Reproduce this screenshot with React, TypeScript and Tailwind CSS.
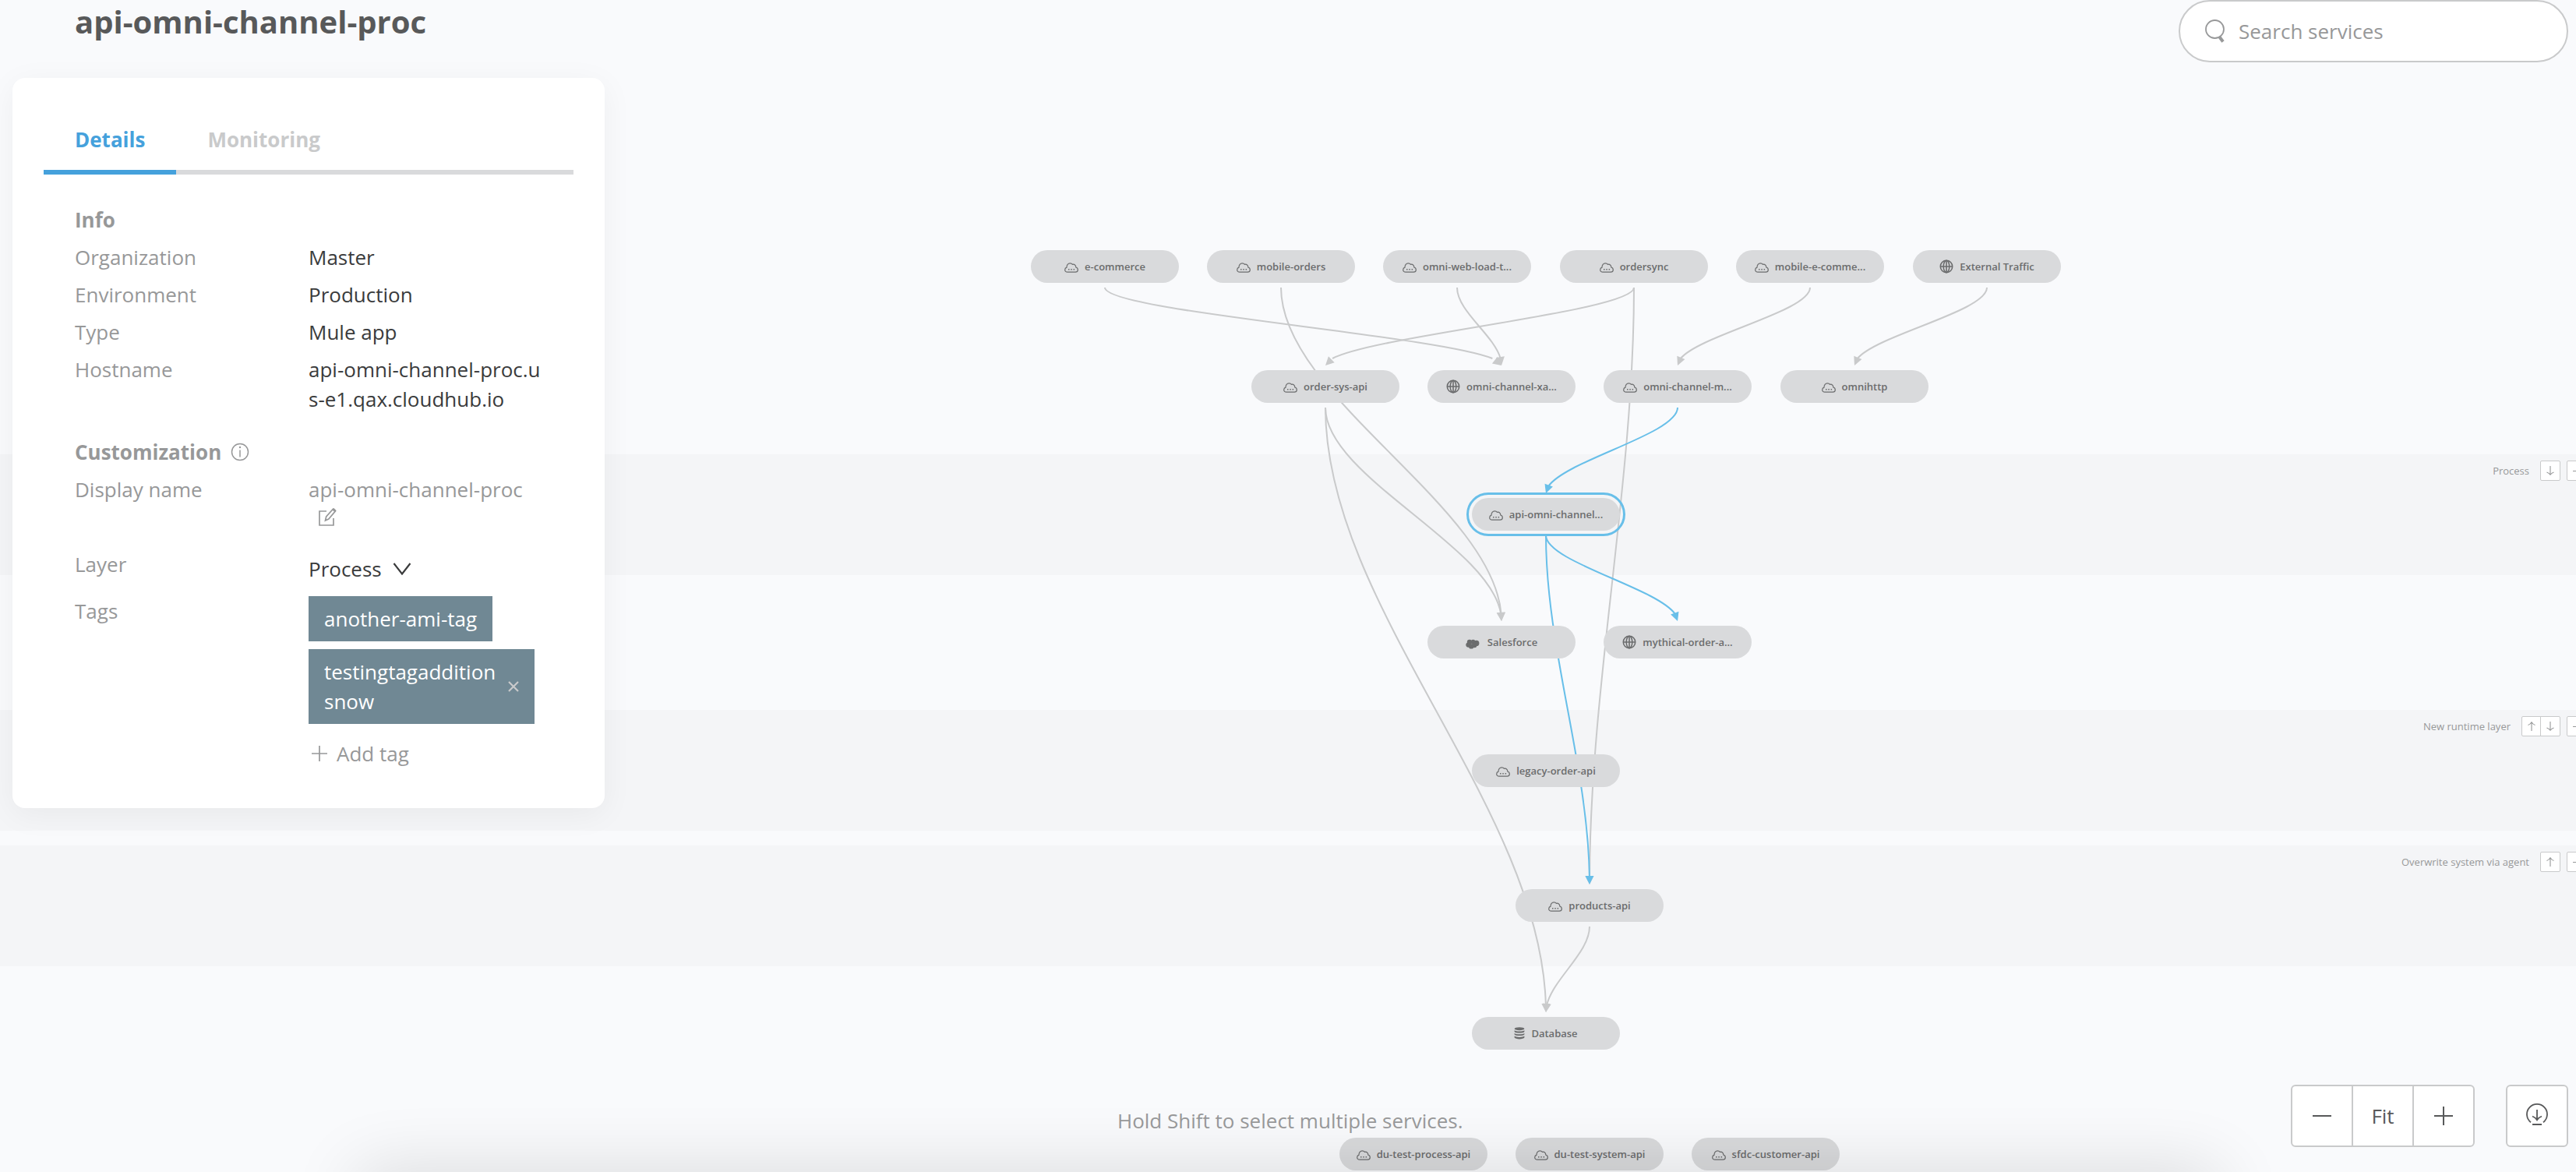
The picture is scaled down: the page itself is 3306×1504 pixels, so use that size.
import React from "react";

type IconName = "cloud" | "globe" | "salesforce" | "database";

interface ServiceNode {
  id: string;
  label: string;
  icon: IconName;
  x: number;
  y: number;
  selected?: boolean;
}

const NODES: ServiceNode[] = [
  { id: "ecommerce", label: "e-commerce", icon: "cloud", x: 1418, y: 342 },
  { id: "mobile", label: "mobile-orders", icon: "cloud", x: 1644, y: 342 },
  { id: "omniweb", label: "omni-web-load-t...", icon: "cloud", x: 1870, y: 342 },
  { id: "ordersync", label: "ordersync", icon: "cloud", x: 2097, y: 342 },
  { id: "mobilee", label: "mobile-e-comme...", icon: "cloud", x: 2323, y: 342 },
  { id: "external", label: "External Traffic", icon: "globe", x: 2550, y: 342 },
  { id: "ordersys", label: "order-sys-api", icon: "cloud", x: 1701, y: 496 },
  { id: "omnixa", label: "omni-channel-xa...", icon: "globe", x: 1927, y: 496 },
  { id: "omnim", label: "omni-channel-m...", icon: "cloud", x: 2153, y: 496 },
  { id: "omnihttp", label: "omnihttp", icon: "cloud", x: 2380, y: 496 },
  { id: "apiomni", label: "api-omni-channel...", icon: "cloud", x: 1984, y: 660, selected: true },
  { id: "salesforce", label: "Salesforce", icon: "salesforce", x: 1927, y: 824 },
  { id: "mythical", label: "mythical-order-a...", icon: "globe", x: 2153, y: 824 },
  { id: "legacy", label: "legacy-order-api", icon: "cloud", x: 1984, y: 989 },
  { id: "products", label: "products-api", icon: "cloud", x: 2040, y: 1162 },
  { id: "database", label: "Database", icon: "database", x: 1984, y: 1326 },
  { id: "dupro", label: "du-test-process-api", icon: "cloud", x: 1814, y: 1481 },
  { id: "dusys", label: "du-test-system-api", icon: "cloud", x: 2040, y: 1481 },
  { id: "sfdc", label: "sfdc-customer-api", icon: "cloud", x: 2266, y: 1481 },
];

const EDGES: [string, string, boolean][] = [
  ["ecommerce", "omnixa", false],
  ["mobile", "salesforce", false],
  ["omniweb", "omnixa", false],
  ["ordersync", "ordersys", false],
  ["ordersync", "products", false],
  ["mobilee", "omnim", false],
  ["external", "omnihttp", false],
  ["ordersys", "salesforce", false],
  ["ordersys", "database", false],
  ["products", "database", false],
  ["omnim", "apiomni", true],
  ["apiomni", "mythical", true],
  ["apiomni", "products", true],
];

function Edge({ from, to, active }: { from: ServiceNode; to: ServiceNode; active: boolean }) {
  const x1 = from.x;
  const y1 = from.y + 27;
  const x2 = to.x;
  const y2 = to.y - 27;
  const h = y2 - y1;
  // With control points at thirds, y runs linearly with t.
  const t = 1 - 9 / h;
  const bx = x1 + (x2 - x1) * (3 * t * t - 2 * t * t * t);
  const by = y1 + h * t;
  const c1y = y1 + (h / 3) * t;
  const c2x = x1 + (x2 - x1) * t * t;
  const c2y = y1 + ((2 * h) / 3) * t;
  const len = Math.hypot(x2 - bx, y2 - by);
  const ux = (x2 - bx) / len;
  const uy = (y2 - by) / len;
  const baseX = x2 - ux * 11;
  const baseY = y2 - uy * 11;
  const color = active ? "#68bfe9" : "#c9cacb";
  return (
    <g>
      <path d={`M${x1} ${y1}C${x1} ${c1y} ${c2x} ${c2y} ${bx} ${by}`} fill="none" stroke={color} strokeWidth="2" />
      <path
        d={`M${x2} ${y2}L${baseX - uy * 5.5} ${baseY + ux * 5.5}L${baseX + uy * 5.5} ${baseY - ux * 5.5}Z`}
        fill={color}
      />
    </g>
  );
}

function NodeIcon({ name }: { name: IconName }) {
  if (name === "globe") {
    return (
      <svg aria-hidden="true" className="h-[18px] w-[18px] shrink-0" viewBox="0 0 18 18" fill="none" stroke="currentColor" strokeWidth="1.6">
        <circle cx="9" cy="9" r="7.7" />
        <ellipse cx="9" cy="9" rx="3.8" ry="7.7" />
        <path d="M9 1v16M1 9h16" />
      </svg>
    );
  }
  if (name === "salesforce") {
    return (
      <svg aria-hidden="true" className="mt-1 mr-[2px] h-[13px] w-[18px] shrink-0" viewBox="0 0 18 13" fill="currentColor">
        <circle cx="5" cy="4" r="3.2" />
        <circle cx="9.6" cy="3.6" r="2.8" />
        <circle cx="13.8" cy="5.4" r="3.6" />
        <circle cx="3.4" cy="7.6" r="3.1" />
        <circle cx="7.2" cy="9.4" r="3.2" />
        <circle cx="11.2" cy="8" r="3.2" />
      </svg>
    );
  }
  if (name === "database") {
    return (
      <svg aria-hidden="true" className="h-4 w-[14px] shrink-0" viewBox="0 0 14 16" fill="currentColor">
        <ellipse cx="7" cy="2.2" rx="6.4" ry="2" />
        <path d="M.6 4.200c1.6 1.700 11.2 1.700 12.8 0v1.700c-1.2 2-11.6 2-12.8 0zM.6 7.900c1.6 1.700 11.2 1.700 12.8 0v1.700c-1.2 2-11.6 2-12.8 0zM.6 11.600c1.6 1.700 11.2 1.700 12.8 0v2c-1.2 2.400-11.6 2.400-12.8 0z" />
      </svg>
    );
  }
  return (
    <svg aria-hidden="true" className="mt-[2px] h-[13px] w-[18px] shrink-0" viewBox="0 0 18 13" fill="none" stroke="currentColor" strokeWidth="1.2">
      <path d="M4 12.2C2 12.2.7 10.900.7 9.200C.7 7.600 1.700 6.500 3 6.100C2.900 3.200 4.700.8 7.300.8C8.700.8 9.800 1.400 10.500 2.400C12.700 1.700 14.900 3.300 14.800 6C16.300 6.400 17.300 7.600 17.300 9.200C17.300 10.900 16 12.200 14.200 12.200Z" />
      <path d="M5 8.700h1.500M8.300 8.700h1.500M11.600 8.700h1.500" strokeWidth="1.5" />
    </svg>
  );
}

function NodePill({ node }: { node: ServiceNode }) {
  return (
    <button
      type="button"
      className={`absolute flex h-[42px] w-[190px] -translate-x-1/2 -translate-y-1/2 items-center justify-center gap-2 rounded-full bg-[#d9dadc] text-[13px] leading-[18px] font-semibold whitespace-nowrap text-[#6b6c6d] ${
        node.selected ? "outline-[3px] outline-offset-4 outline-[#68bfe9]" : ""
      }`}
      style={{ left: node.x, top: node.y }}
    >
      <NodeIcon name={node.icon} />
      <span>{node.label}</span>
    </button>
  );
}

function ArrowIcon({ up }: { up?: boolean }) {
  return (
    <svg aria-hidden="true" className="h-3 w-3" viewBox="0 0 12 12" fill="none" stroke="#979899" strokeWidth="1.1">
      {up ? <path d="M6 12V1M1.500 4.500Q4.500 3.500 6 .8Q7.500 3.500 10.500 4.500" /> : <path d="M6 0v11M1.500 8Q4.500 9 6 11.200Q7.500 9 10.500 8" />}
    </svg>
  );
}

function LayerBand({ label, up, down }: { label: string; up?: boolean; down?: boolean }) {
  return (
    <div className="flex h-[155px] items-start justify-end overflow-hidden bg-[#f4f5f7] pt-2">
      <span className="mr-3.5 text-[13px] leading-[26px] text-[#979899]">{label}</span>
      <div className="mr-2 flex divide-x divide-[#c9cacb] rounded-xs border border-[#c9cacb] bg-white">
        {up && (
          <button type="button" aria-label={`Move ${label} up`} className="grid h-6 w-6 place-items-center">
            <ArrowIcon up />
          </button>
        )}
        {down && (
          <button type="button" aria-label={`Move ${label} down`} className="grid h-6 w-6 place-items-center">
            <ArrowIcon />
          </button>
        )}
      </div>
      <button
        type="button"
        aria-label={`Collapse ${label}`}
        className="-mr-3.5 grid h-[26px] w-[26px] shrink-0 place-items-center rounded-xs border border-[#c9cacb] bg-white"
      >
        <span className="h-px w-2.5 bg-[#979899]" />
      </button>
    </div>
  );
}

function Canvas() {
  const byId = Object.fromEntries(NODES.map((n) => [n.id, n]));
  return (
    <section aria-label="Service graph" className="absolute inset-0 overflow-hidden">
      <div className="flex flex-col pt-[583px]">
        <LayerBand label="Process" down />
        <div className="h-[173px]" />
        <LayerBand label="New runtime layer" up down />
        <div className="h-[19px]" />
        <LayerBand label="Overwrite system via agent" up />
      </div>
      <svg aria-hidden="true" className="absolute inset-0 h-full w-full">
        {EDGES.map(([a, b, active]) => (
          <Edge key={a + b} from={byId[a]} to={byId[b]} active={active} />
        ))}
      </svg>
      {NODES.map((n) => (
        <NodePill key={n.id} node={n} />
      ))}
      <div className="absolute top-full right-[460px] left-[460px] h-20 shadow-[0_0_90px_rgba(0,0,0,0.14)]" />
    </section>
  );
}

function Row({ label, children }: { label: string; children: React.ReactNode }) {
  return (
    <div className="flex">
      <dt className="w-[300px] shrink-0 text-[#979899]">{label}</dt>
      <dd className="min-w-0 flex-1 break-all text-[#3a3b3c]">{children}</dd>
    </div>
  );
}

function DetailsCard() {
  return (
    <aside className="w-[760px] rounded-2xl bg-white px-10 pt-10 pb-[51px] text-[26px] leading-[38px] shadow-[0_8px_40px_rgba(0,0,0,0.05)]">
      <div role="tablist" className="flex border-b-6 border-[#d9dadc] font-bold">
        <button type="button" role="tab" aria-selected="true" className="-mb-1.5 h-[84px] border-b-6 border-[#45a1dc] px-10 text-[#45a1dc]">
          Details
        </button>
        <button type="button" role="tab" aria-selected="false" className="h-[78px] px-10 text-[#c9cacb]">
          Monitoring
        </button>
      </div>
      <div className="pt-[39px] pr-8 pl-10">
        <h2 className="mb-2.5 font-bold text-[#979899]">Info</h2>
        <dl className="flex flex-col gap-2.5">
          <Row label="Organization">Master</Row>
          <Row label="Environment">Production</Row>
          <Row label="Type">Mule app</Row>
          <Row label="Hostname">api-omni-channel-proc.us-e1.qax.cloudhub.io</Row>
        </dl>
        <h2 className="mt-[30px] mb-2.5 flex items-center gap-3 font-bold text-[#979899]">
          Customization
          <svg aria-label="About customization" role="img" className="h-6 w-6" viewBox="0 0 24 24" fill="none" stroke="currentColor" strokeWidth="1.500">
            <circle cx="12" cy="12" r="10.500" />
            <path d="M12 9.500v9" />
            <circle cx="12" cy="6" r="1.200" fill="currentColor" stroke="none" />
          </svg>
        </h2>
        <dl className="flex flex-col">
          <Row label="Display name">
            <span className="text-[#979899]">api-omni-channel-proc</span>
            <button type="button" aria-label="Edit display name" className="ml-3 flex h-[38px] items-start pt-1 text-[#979899]">
              <svg aria-hidden="true" className="h-6 w-6" viewBox="0 0 24 24" fill="none" stroke="currentColor" strokeWidth="1.700">
                <path d="M11 5H2v18h18V14" />
                <path d="M9.500 17l1.200-5L19.500 2.200l3 2.600L13.800 15z" />
                <path d="M18.500 3.500l3.200 2.800 1.800-2.300L20.400.9z" fill="currentColor" stroke="none" />
              </svg>
            </button>
          </Row>
          <div className="mt-5 flex">
            <dt className="w-[300px] shrink-0 text-[#979899]">
              <label htmlFor="layer">Layer</label>
            </dt>
            <dd className="flex items-center pt-1.5 text-[#3a3b3c]">
              <div className="grid items-center">
                <select id="layer" defaultValue="Process" className="col-start-1 row-start-1 h-[38px] w-[140px] appearance-none bg-transparent">
                  <option>Process</option>
                  <option>New runtime layer</option>
                  <option>Overwrite system via agent</option>
                </select>
                <svg aria-hidden="true" className="pointer-events-none col-start-1 row-start-1 mr-2 h-4 w-6 justify-self-end" viewBox="0 0 24 16" fill="none" stroke="currentColor" strokeWidth="2.200">
                  <path d="M1.500 1L12 14.500L22.500 1" />
                </svg>
              </div>
            </dd>
          </div>
          <div className="mt-4 flex">
            <dt className="w-[300px] shrink-0 text-[#979899]">Tags</dt>
            <dd className="flex w-[290px] flex-col items-start gap-2.5">
              <span className="bg-[#708894] px-5 py-2.5 text-white">another-ami-tag</span>
              <span className="flex w-full items-center bg-[#708894] px-5 py-2.5 text-white">
                <span className="w-[228px] break-all">testingtagaddition snow</span>
                <button type="button" aria-label="Remove tag" className="ml-2.5">
                  <svg aria-hidden="true" className="h-3.5 w-3.5" viewBox="0 0 14 14" stroke="#c9cacb" strokeWidth="2.200">
                    <path d="M1 1l12 12M13 1L1 13" />
                  </svg>
                </button>
              </span>
              <button type="button" className="mt-[9px] flex items-center gap-3 pl-1 text-[#979899]">
                <svg aria-hidden="true" className="h-5 w-5" viewBox="0 0 20 20" stroke="currentColor" strokeWidth="1.700">
                  <path d="M10 0v20M0 10h20" />
                </svg>
                Add tag
              </button>
            </dd>
          </div>
        </dl>
      </div>
    </aside>
  );
}

export default function App() {
  return (
    <main className="relative flex min-h-screen w-full flex-col overflow-hidden bg-[#f9fafc] font-['Open_Sans',sans-serif]">
      <Canvas />
      <header className="relative flex items-start justify-between pr-2.5 pl-24">
        <h1 className="text-[40px] leading-14 font-bold text-[#58595a]">api-omni-channel-proc</h1>
        <label className="flex h-20 w-[500px] items-center gap-[18px] rounded-full border-2 border-[#c9cacb] bg-white pr-6 pl-8 text-[#979899]">
          <svg aria-hidden="true" className="h-[30px] w-[25px] shrink-0" viewBox="0 0 25 30" fill="none" stroke="currentColor">
            <circle cx="12.500" cy="12.500" r="11.500" strokeWidth="1.800" />
            <path d="M18.500 22.500l4.500 6" strokeWidth="4" />
          </svg>
          <input
            type="search"
            aria-label="Search services"
            placeholder="Search services"
            className="min-w-0 flex-1 bg-transparent text-[26px] leading-[38px] outline-none placeholder:text-[#979899]"
          />
        </label>
      </header>
      <div className="relative mt-5 ml-4 self-start">
        <DetailsCard />
      </div>
      <footer className="relative mt-auto flex items-start justify-between pr-2.5 pb-8 pl-[1434px] text-[26px] leading-[38px]">
        <p className="mt-[27px] text-[#979899]">Hold Shift to select multiple services.</p>
        <div className="flex gap-10 text-[#58595a]">
          <div className="flex h-20 divide-x-2 divide-[#c9cacb] rounded-md border-2 border-[#c9cacb] bg-white">
            <button type="button" aria-label="Zoom out" className="grid w-[78px] place-items-center">
              <span className="h-0.5 w-6 bg-[#58595a]" />
            </button>
            <button type="button" className="w-[78px]">Fit</button>
            <button type="button" aria-label="Zoom in" className="grid w-[76px] place-items-center">
              <svg aria-hidden="true" className="h-6 w-6" viewBox="0 0 24 24" stroke="currentColor" strokeWidth="2">
                <path d="M12 0v24M0 12h24" />
              </svg>
            </button>
          </div>
          <button type="button" aria-label="Download" className="grid h-20 w-20 place-items-center rounded-md border-2 border-[#c9cacb] bg-white">
            <svg aria-hidden="true" className="-mt-1 h-7 w-7" viewBox="0 0 28 28" fill="none" stroke="currentColor" strokeWidth="1.800">
              <path d="M6 24.200A13 13 0 1 1 22 24.200" />
              <path d="M14 8v13M8 16.500Q12 18 14 21.300Q16 18 20 16.500M8 27h12" />
            </svg>
          </button>
        </div>
      </footer>
    </main>
  );
}
